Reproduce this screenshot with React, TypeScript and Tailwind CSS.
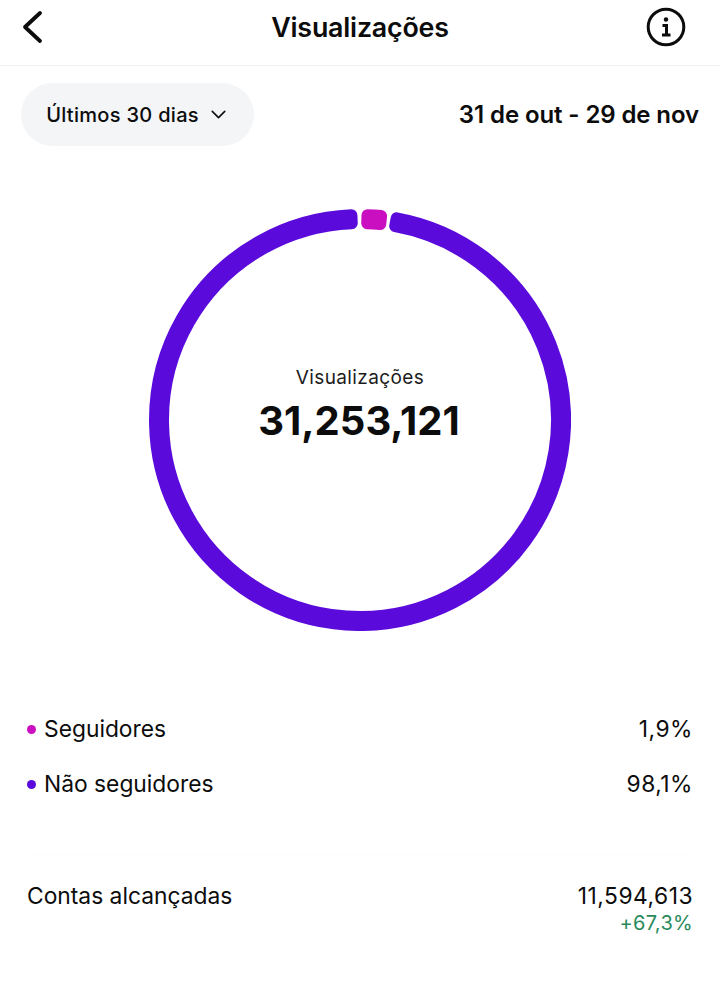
import { ChevronDown } from "lucide-react";

const CX = 211;
const CY = 211;
const R_OUT = 205;
const R_IN = 197;

const pt = (r: number, deg: number) => {
  const a = ((deg - 90) * Math.PI) / 180;
  return `${(CX + r * Math.cos(a)).toFixed(2)} ${(CY + r * Math.sin(a)).toFixed(2)}`;
};

// annular sector, inset by the stroke so the corners come out round
const sector = (from: number, to: number) => {
  const large = Math.abs(to - from) > 180 ? 1 : 0;
  return `M${pt(R_OUT, from)} A${R_OUT} ${R_OUT} 0 ${large} 1 ${pt(R_OUT, to)} L${pt(R_IN, to)} A${R_IN} ${R_IN} 0 ${large} 0 ${pt(R_IN, from)} Z`;
};

const Ring = () => (
  <svg width="422" height="422" viewBox="0 0 422 422" className="block">
    <path d={sector(10.3, 357.6)} fill="#5a0bdc" stroke="#5a0bdc" strokeWidth="12" strokeLinejoin="round" />
    <path d={sector(2.1, 5.9)} fill="#c90fc0" stroke="#c90fc0" strokeWidth="12" strokeLinejoin="round" />
  </svg>
);

const LegendRow = ({ color, label, value }: { color: string; label: string; value: string }) => (
  <div className="flex items-center justify-between h-[55px]">
    <div className="flex items-center gap-2">
      <span className={`w-[9px] h-[9px] rounded-full ${color}`} />
      <span>{label}</span>
    </div>
    <span className="tracking-[0.5px]">{value}</span>
  </div>
);

export default function App() {
  return (
    <div className="w-[720px] h-[985px] bg-white text-[#0c0c0c] overflow-hidden font-['Inter',sans-serif]">
      <header className="h-[66px] grid grid-cols-[1fr_auto_1fr] items-center px-[20px] pb-[11px] border-b border-[#f3f3f3]">
        <svg width="24" height="34" viewBox="0 0 24 34" fill="none" stroke="#0c0c0c" strokeWidth="3.8" strokeLinecap="round" strokeLinejoin="round">
          <path d="M20 3 L5 17 L20 31" />
        </svg>
        <h1 className="text-[26.8px] leading-[34px] font-semibold tracking-[-0.2px]">Visualizações</h1>
        <svg width="40" height="40" viewBox="0 0 40 40" fill="none" stroke="#0c0c0c" className="justify-self-end mr-[14px]">
          <circle cx="20" cy="20" r="17.8" strokeWidth="3" />
          <circle cx="20" cy="12.5" r="2.2" fill="#0c0c0c" stroke="none" />
          <path d="M16.5 18.5 H20.5 V27.5 M16 28 H24.5" strokeWidth="3" />
        </svg>
      </header>

      <div className="flex items-center justify-between pl-[21px] pr-[21px] mt-[17px]">
        <button className="w-[233px] h-[63px] rounded-[32px] bg-[#f3f5f7] flex items-center justify-center gap-[7px] pl-[2px] text-[20px] tracking-[0.3px] font-medium">
          Últimos 30 dias
          <ChevronDown size={25} strokeWidth={1.5} />
        </button>
        <span className="text-[24px] font-semibold tracking-[-0.1px]">31 de out - 29 de nov</span>
      </div>

      <div className="relative w-[422px] h-[422px] mx-auto mt-[63px]">
        <Ring />
        <div className="absolute inset-0 flex flex-col items-center justify-center pb-[30px]">
          <span className="text-[19px] leading-[24px] text-[#1c1c1c] tracking-[0.4px]">Visualizações</span>
          <span className="text-[40px] leading-[48px] font-bold mt-[7px] -ml-[2px]">31,253,121</span>
        </div>
      </div>

      <div className="mt-[71px] px-[27px] text-[22.8px]">
        <LegendRow color="bg-[#c90fc0]" label="Seguidores" value="1,9%" />
        <LegendRow color="bg-[#5a0bdc]" label="Não seguidores" value="98,1%" />
      </div>

      <div className="mx-[27px] mt-[42px] border-t border-[#fcfcfc] pt-[26px] flex justify-between text-[22.8px]">
        <span className="leading-[30px]">Contas alcançadas</span>
        <div className="flex flex-col items-end">
          <span className="leading-[30px] tracking-[0.5px]">11,594,613</span>
          <span className="text-[20px] leading-[24px] text-[#2a8a5c] tracking-[0.3px]">+67,3%</span>
        </div>
      </div>
    </div>
  );
}
